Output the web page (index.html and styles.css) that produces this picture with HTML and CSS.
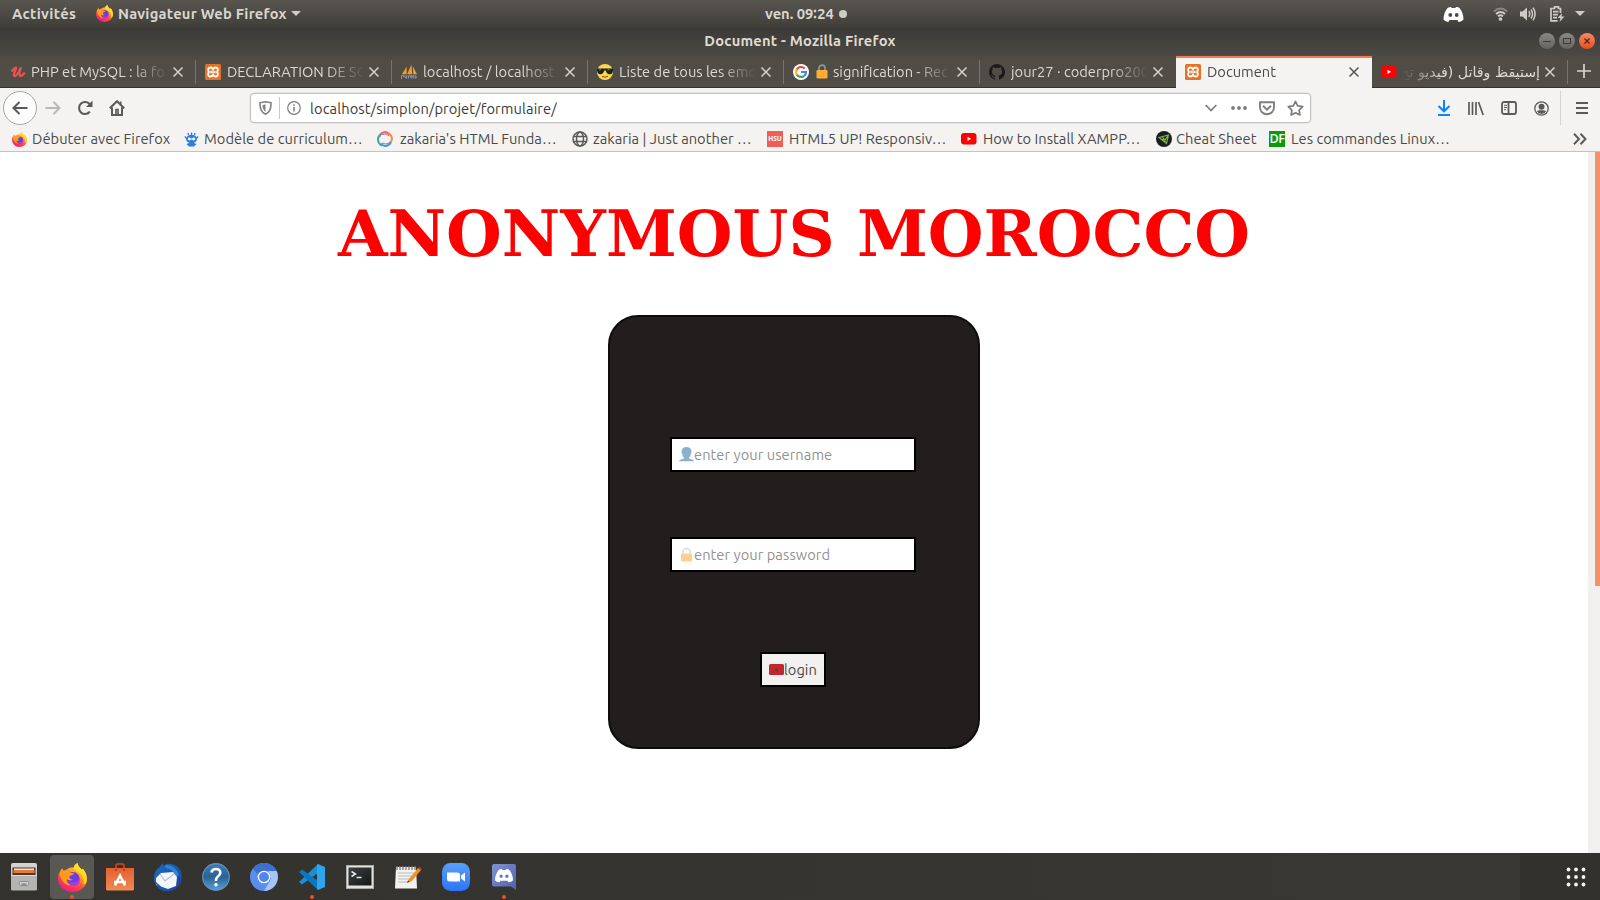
FILE: index.html
```html
<!DOCTYPE html>
<html lang="fr">
<head>
<meta charset="utf-8">
<title>Document</title>
<link rel="stylesheet" href="styles.css">
</head>
<body>
<svg class="defs" width="0" height="0">
  <defs>
    <linearGradient id="ffOuter" x1="0.85" y1="0.05" x2="0.3" y2="1"><stop offset="0" stop-color="#fff13f"/><stop offset=".35" stop-color="#ffa51f"/><stop offset=".65" stop-color="#ff4a3c"/><stop offset="1" stop-color="#f0188a"/></linearGradient>
    <linearGradient id="tbird" x1="0" y1="0" x2="1" y2="1"><stop offset="0" stop-color="#1d6fc0"/><stop offset="1" stop-color="#1b3f9c"/></linearGradient>
    <linearGradient id="grey" x1="0" y1="0" x2="0" y2="1"><stop offset="0" stop-color="#d6d6d6"/><stop offset="1" stop-color="#a2a2a2"/></linearGradient>
    <linearGradient id="bag" x1="0" y1="0" x2="0" y2="1"><stop offset="0" stop-color="#e4602f"/><stop offset="1" stop-color="#f08a55"/></linearGradient>
    <linearGradient id="help" x1="0" y1="0" x2="0" y2="1"><stop offset="0" stop-color="#3f7db4"/><stop offset=".5" stop-color="#2c6294"/><stop offset="1" stop-color="#5b9fd4"/></linearGradient>
    <linearGradient id="term" x1="0" y1="0" x2="1" y2="1"><stop offset="0" stop-color="#3c4040"/><stop offset="1" stop-color="#151717"/></linearGradient>
    <linearGradient id="zoomg" x1="0" y1="0" x2="0" y2="1"><stop offset="0" stop-color="#57a0fb"/><stop offset="1" stop-color="#2d75f5"/></linearGradient>
    <linearGradient id="disc" x1="0" y1="0" x2="1" y2="1"><stop offset="0" stop-color="#7f93d4"/><stop offset="1" stop-color="#5261a8"/></linearGradient>
  </defs>
  <symbol id="firefox" viewBox="0 0 28 28">
    <path fill="url(#ffOuter)" d="M4 5c0 1 .6 2 1.500 2.500L8.500 6C11 4.500 13 4 15 4.500 15.500 2.500 17 .8 19 0c0 3 2 4 4 6.500l1-1c2 2 4 6 4 9.500C28 22.500 22 28 14 28S0 22 0 14.500C0 10 2 8 4 5z"/>
    <circle cx="14.500" cy="15" r="6.300" fill="#6d3ce0"/>
    <path fill="#a83be0" d="M10 17q3 3 8 1 2-2 2.500-4 2 6-3 7.500-5 1-7.500-4.500z"/>
    <path fill="#ff9a1c" d="M1.500 11c.500-2.500 1.500-4.500 2.500-6 .5 1.500 1 2 2 2.500 2-.3 4 .2 5.500 1.800 1.500.2 3 .2 4 .7-.5 2-4 1.700-4.500 3.500.2 1.500 1.500 2.500 3.500 2.500-2 1.500-5 1-6-.5-.5 2 1 5 4.500 6C6 22 3 16 1.500 11z"/>
    <path fill="#ffe226" d="M19 0c0 3 2 4 4 6.500l1-1c3 3.500 4.500 8 3.500 13-1 1.500-2 2-3 2 1-5-1-9-4.500-11.500-2-1.500-4-2-5-4.500C15.500 2.500 17 .8 19 0z" opacity=".8"/>
  </symbol>
  <symbol id="xampp" viewBox="0 0 16 16">
    <rect width="16" height="16" rx="1.500" fill="#e77225"/>
    <path d="M8 5.300C7 3.400 5.600 3.200 4.500 3.600 2.600 4.300 3 6.700 3.900 8 3 9.300 2.600 11.700 4.500 12.400 5.600 12.800 7 12.600 8 10.700 9 12.600 10.400 12.800 11.500 12.400 13.400 11.700 13 9.300 12.100 8 13 6.700 13.400 4.300 11.500 3.600 10.400 3.200 9 3.400 8 5.300z" fill="none" stroke="#fff" stroke-width="1.900"/><path d="M6 8h4M6 6.800v2.400M10 6.800v2.400" stroke="#fff" stroke-width="1.300"/>
  </symbol>
  <symbol id="youtube" viewBox="0 0 16 16"><rect y="2" width="15.500" height="11.500" rx="3" fill="#f00"/><path d="M6.500 5.700v4.200l3.700-2.100z" fill="#fff"/></symbol>
  <symbol id="close" viewBox="0 0 12 12"><path d="M1.500 1.500l9 9m0-9l-9 9" stroke="currentColor" stroke-width="1.600" fill="none"/></symbol>
  <symbol id="discordFace" viewBox="0 0 20 15"><path fill="currentColor" fill-rule="evenodd" d="M4 1C5.500.3 6.500.1 7.500 0l.7 1h3.600l.7-1c1.500.1 2.500.4 3.500 1 2.500 3 4 7 4 11.500-1.500 1.700-3 2.200-5 2.500l-1-2H6l-1 2c-2-.3-3.500-.8-5-2.500C0 8 1.500 4 4 1zM6.800 6A1.900 2 0 1 0 6.800 10 1.900 2 0 1 0 6.800 6zM13.200 6A1.900 2 0 1 0 13.200 10 1.900 2 0 1 0 13.200 6z"/></symbol>
</svg>

<header class="panel">
  <div class="panel-left"><span class="t-act">Activités</span>
    <svg class="panel-ff" width="17" height="17"><use href="#firefox"/></svg>
    <span class="t-nav">Navigateur Web Firefox</span><i class="caret"></i></div>
  <div class="clock"><span class="t-clock">ven. 09∶24</span><i class="dot"></i></div>
  <div class="tray">
    <svg class="tray-discord" width="21" height="15"><use href="#discordFace"/></svg>
    <svg class="tray-wifi" width="15" height="14" viewBox="0 0 15 14" fill="none" stroke="#cfccc5" stroke-width="1.900"><path d="M.8 4.500q6.700-6 13.400 0" opacity=".45"/><path d="M3 7q4.500-4 9 0"/><path d="M5 9.300q2.500-2 5 0"/><circle cx="7.500" cy="12" r="1.100" fill="#cfccc5" stroke-width="1.500"/></svg>
    <svg class="tray-sound" width="16" height="14" viewBox="0 0 16 14" fill="none" stroke="#cfccc5" stroke-width="1.500"><path d="M0 4.500h2.500L7 .5v13L2.500 9.500H0z" fill="#cfccc5" stroke="none"/><path d="M8.800 4.200q1.800 2.800 0 5.600M11 2.500q3 4.500 0 9M13 .7q4.200 6.300 0 12.600"/></svg>
    <svg class="tray-batt" width="15" height="16" viewBox="0 0 15 16" fill="none" stroke="#cfccc5" stroke-width="1.700"><path d="M10.500 7V2.500h-2v-1.600h-4v1.600H1v12.300h6.500M3 5.700h5.500M3 8.700h5M3 11.700h4"/><path d="M12 7l-4.500 5h3l-1 4 5-5.500h-3z" fill="#cfccc5" stroke="none"/></svg>
    <i class="caret"></i>
  </div>
</header>

<div class="titlebar">
  <span class="t-title">Document - Mozilla Firefox</span>
  <div class="win-buttons">
    <i class="wb"><svg width="16" height="16"><path d="M4 8.500h8" stroke="#3b3a36"/></svg></i>
    <i class="wb"><svg width="16" height="16"><rect x="4.500" y="5.500" width="7" height="5" fill="none" stroke="#3b3a36"/></svg></i>
    <i class="wb wb-close"><svg width="16" height="16"><path d="M5.500 5.500l5 5m0-5l-5 5" stroke="#552010" stroke-width="1.200"/></svg></i>
  </div>
</div>

<nav class="tabs">
  <div class="tab first"><svg width="16" height="16" viewBox="0 0 16 16"><path d="M1.500 7.500C3.500 5.500 4.500 3.500 6 3.600 7 5 2.700 10 4 11.800 5.500 13.500 9.500 8 11 3.200 9.500 8 8.800 11.300 10.200 12c1.400.2 3-1.400 4.600-3.500" fill="none" stroke="#ec5252" stroke-width="2.200"/></svg><span class="label">PHP et MySQL : la fo</span><svg class="x" width="12" height="12"><use href="#close"/></svg></div>
  <div class="tab"><svg width="16" height="16"><use href="#xampp"/></svg><span class="label">DECLARATION DE SO</span><svg class="x" width="12" height="12"><use href="#close"/></svg></div>
  <div class="tab"><svg width="16" height="16" viewBox="0 0 17 16"><path d="M1 10.500l5-8v8zM6.500 10.500L11 0l1 10.500zM13 10.500L12.500 2 17 10.500z" fill="#f59b28"/><path d="M.5 15.500V12l2-.5.500 2M4 11.500v2h2v-2m0 4v-3M8 12v3m0-3h2v2m1-3v4m0-2h2m0-2v4m2-4v4m1-3v3" stroke="#9a9bc9" fill="none" stroke-width=".9"/></svg><span class="label">localhost / localhost</span><svg class="x" width="12" height="12"><use href="#close"/></svg></div>
  <div class="tab"><svg width="16" height="16" viewBox="0 0 16 16"><circle cx="8" cy="8" r="8" fill="#fdd64b"/><path d="M0 4.500h16v1.700c-.4 3.400-1.300 4-3.500 4S9.300 8.500 8.800 6.500H7.200C6.700 8.500 5.700 10.200 3.500 10.200S.4 9 0 6.200z" fill="#1f2224"/><path d="M2 6l2-.5M10.500 6l2-.5" stroke="#777"/><path d="M5 12.500q3 1.500 6-.3" stroke="#6e4d18" fill="none"/></svg><span class="label">Liste de tous les emo</span><svg class="x" width="12" height="12"><use href="#close"/></svg></div>
  <div class="tab"><svg width="16" height="16" viewBox="0 0 16 16" fill="none" stroke-width="2.200"><circle cx="8" cy="8" r="8" fill="#fff"/><path d="M11.700 4.600A5 5 0 0 0 3.800 5.300" stroke="#ea4335"/><path d="M3.800 5.300a5 5 0 0 0 0 5.300" stroke="#fbbc05"/><path d="M3.800 10.600a5 5 0 0 0 7.400 1.200" stroke="#34a853"/><path d="M8 8h5a5 5 0 0 1-1.800 3.800" stroke="#4285f4"/></svg><svg class="tab-lock" width="12" height="15" viewBox="0 0 12 15"><path d="M3 7V4.200a3 3 0 0 1 6 0V7" fill="none" stroke="#8799a3" stroke-width="1.700"/><rect x=".5" y="6" width="11" height="8.500" rx="1.300" fill="#ffac33"/></svg><span class="label">signification - Rec</span><svg class="x" width="12" height="12"><use href="#close"/></svg></div>
  <div class="tab"><svg width="16" height="16" viewBox="0 0 16 16"><path fill="#1b1b1b" d="M8 0a8 8 0 0 0-2.500 15.600c.4.100.5-.2.500-.4v-1.500c-2.200.5-2.700-1-2.700-1-.4-.9-.9-1.100-.9-1.100-.7-.5.1-.5.100-.5.800.1 1.200.8 1.200.8.700 1.300 1.900.9 2.300.7 0-.5.300-.9.500-1.100-1.800-.2-3.600-.9-3.600-4 0-.9.300-1.600.8-2.100-.1-.200-.4-1 .1-2.100 0 0 .7-.2 2.200.8a7.600 7.600 0 0 1 4 0c1.500-1 2.200-.8 2.200-.8.400 1.100.1 1.900.1 2.100.5.500.8 1.200.8 2.100 0 3.100-1.900 3.800-3.700 4 .3.300.6.800.6 1.500v2.200c0 .200.100.5.500.4A8 8 0 0 0 8 0z"/></svg><span class="label">jour27 · coderpro200</span><svg class="x" width="12" height="12"><use href="#close"/></svg></div>
  <div class="tab active"><svg width="16" height="16"><use href="#xampp"/></svg><span class="label">Document</span><svg class="x" width="12" height="12"><use href="#close"/></svg></div>
  <div class="tab last"><svg width="16" height="16"><use href="#youtube"/></svg><span class="label rtl" dir="rtl">إستيقظ وقاتل (فيديو تح</span><svg class="x" width="12" height="12"><use href="#close"/></svg></div>
  <svg class="plus" width="14" height="14"><path d="M7 0v14M0 7h14" stroke="#d8d5cf" stroke-width="1.700"/></svg>
</nav>

<div class="toolbar">
  <i class="back"><svg width="16" height="14" viewBox="0 0 16 14" fill="none" stroke="#5a5a58" stroke-width="2"><path d="M15.500 7H1.500M7.500 1l-6 6 6 6"/></svg></i>
  <svg class="fwd" width="16" height="14" viewBox="0 0 16 14" fill="none" stroke="#b9b8b6" stroke-width="2"><path d="M.5 7h14M8.500 1l6 6-6 6"/></svg>
  <svg class="reload" width="16" height="16" viewBox="0 0 16 16"><path d="M12.800 4.300A6 6 0 1 0 12.800 11.700" fill="none" stroke="#5a5a58" stroke-width="2.100"/><path d="M15.500.5v6.500H9z" fill="#5a5a58"/></svg>
  <svg class="home" width="16" height="16" viewBox="0 0 16 16" fill="none" stroke="#5a5a58" stroke-width="2"><path d="M.8 8.300L8 1.200l7.200 7.100M3 7.500V15h10V7.500"/><path d="M7 15V9.500h2V15M11.700 1.500v3" stroke-width="1.600"/></svg>
  <div class="urlbar">
    <svg class="shield" width="13" height="14" viewBox="0 0 13 14"><path d="M1 1.800Q4 1.500 6.500.8 9 1.500 12 1.800c.2 6-1.500 9.700-5.500 11.400C2.500 11.500.8 7.800 1 1.800z" fill="none" stroke="#828281" stroke-width="1.600"/><path d="M6.500 3.200Q5 4 3.500 4c0 3.500 1 5.700 3 7z" fill="#828281"/></svg>
    <i class="url-sep"></i>
    <svg class="info" width="14" height="14" viewBox="0 0 14 14"><circle cx="7" cy="7" r="6.300" fill="none" stroke="#7d7d7c" stroke-width="1.200"/><path d="M7 6v4.500M7 3.300v1.500" stroke="#7d7d7c" stroke-width="1.500"/></svg>
    <span class="t-url">localhost/simplon/projet/formulaire/</span>
    <svg class="chev" width="12" height="8" viewBox="0 0 12 8" fill="none" stroke="#7d7d7c" stroke-width="1.800"><path d="M.7 1L6 6.500 11.300 1"/></svg>
    <svg class="dots" width="16" height="4" fill="#7d7d7c"><circle cx="2" cy="2" r="1.900"/><circle cx="8" cy="2" r="1.900"/><circle cx="14" cy="2" r="1.900"/></svg>
    <svg class="pocket" width="16" height="15" viewBox="0 0 16 15" fill="none" stroke="#7d7d7c" stroke-width="1.900"><path d="M1 1.300h14v5a7 7 0 0 1-14 0z" stroke-linejoin="round"/><path d="M4.500 5.300L8 8.700l3.500-3.400" stroke-linecap="round"/></svg>
    <svg class="star" width="17" height="16" viewBox="0 0 17 16"><path d="M8.500 1.400l2.200 4.500 5 .7-3.600 3.500.8 4.900-4.400-2.300L4.100 15l.8-4.900L1.300 6.600l5-.7z" fill="none" stroke="#7d7d7c" stroke-width="1.700" stroke-linejoin="round"/></svg>
  </div>
  <div class="tools">
    <svg width="14" height="16" fill="none" stroke="#0a84ff" stroke-width="2"><path d="M7 0v11M1.500 6L7 11.300 12.500 6M1 15h12"/></svg>
    <svg width="16" height="15" fill="none" stroke="#5a5a58" stroke-width="1.700"><path d="M1 1v13M4.500 1v13M8 1v13M10.500 1l4.700 13"/></svg>
    <svg width="16" height="14" fill="none" stroke="#5a5a58" stroke-width="1.800"><rect x="1" y="1" width="14" height="12" rx="2"/><path d="M7.500 1v12"/><path d="M3 4.300h3M3 6.500h3M3 8.700h2" stroke-width="1"/></svg>
    <svg width="15" height="15" viewBox="0 0 15 15"><circle cx="7.500" cy="7.500" r="6.700" fill="none" stroke="#5a5a58" stroke-width="1.300"/><circle cx="7.500" cy="5.800" r="3" fill="#5a5a58"/><path d="M2.800 10.300q2-1.300 3-1h3.400q1-.3 3 1Q10.500 13 7.500 13t-4.700-2.700z" fill="#5a5a58"/></svg>
  </div>
  <i class="tool-sep"></i>
  <svg class="menu" width="12" height="12"><path d="M0 1h12M0 6h12M0 11h12" stroke="#5a5a58" stroke-width="2"/></svg>
</div>

<div class="bookmarks">
  <a class="bm b1"><svg width="15" height="15"><use href="#firefox"/></svg><span>Débuter avec Firefox</span></a>
  <a class="bm b2"><svg width="15" height="15" viewBox="0 0 15 15"><path d="M.8 4.500l2 2m11.400-2l-2 2M4.500 3L4 1M10.500 3l.5-2M7.500 3V.5" stroke="#2a7de1" stroke-width="1.300"/><ellipse cx="7.500" cy="7" rx="5.500" ry="4.300" fill="#2a7de1"/><path d="M2.500 12l2.500-1h5l2.500 1-2.500 2.500H5z" fill="#2a7de1"/><path d="M4 7h7" stroke="#fff"/><circle cx="5.300" cy="7" r="1.400" fill="#fff"/><circle cx="9.700" cy="7" r="1.400" fill="#fff"/></svg><span>Modèle de curriculum…</span></a>
  <a class="bm b3"><svg width="16" height="16" viewBox="0 0 16 16" fill="none" stroke-width="2"><path d="M2.500 4.500A7 7 0 0 1 8 1q3 .2 4 3" stroke="#ee6c5a"/><path d="M11 2a7 7 0 0 1 4 6q0 2-2.500 4" stroke="#f58a4e"/><path d="M14 11a7 7 0 0 1-6 4q-2.500 0-4-2.500" stroke="#3d9ad1"/><path d="M5 14.500A7 7 0 0 1 1 8q0-3 3-4" stroke="#35b09b"/><path d="M5 3.500q4-2 7.500 1.500M12 12q-3 2-7 0" stroke="#c75bb2" stroke-width="1"/></svg><span>zakaria's HTML Funda…</span></a>
  <a class="bm b4"><svg width="16" height="16" viewBox="0 0 16 16" fill="none" stroke="#5a5a58" stroke-width="1.500"><circle cx="8" cy="8" r="7"/><ellipse cx="8" cy="8" rx="3.500" ry="7"/><path d="M1.500 5.500h13M1.500 10.500h13"/></svg><span>zakaria | Just another …</span></a>
  <a class="bm b5"><i class="hsu">HSU</i><span>HTML5 UP! Responsiv…</span></a>
  <a class="bm b6"><svg width="16" height="16"><use href="#youtube"/></svg><span>How to Install XAMPP…</span></a>
  <a class="bm b7"><svg width="16" height="16" viewBox="0 0 16 16"><circle cx="8" cy="8" r="8" fill="#1c1f22"/><path d="M3 6.500L12.500 4l-2 8.500zM6.500 6l2.500 3 3-4.500M5 8l4 1v2.500" fill="none" stroke="#83b93b" stroke-width="1.100"/></svg><span>Cheat Sheet</span></a>
  <a class="bm b8"><i class="df">DF</i><span>Les commandes Linux…</span></a>
  <svg class="more" width="14" height="12" fill="none" stroke="#5a5a58" stroke-width="2"><path d="M1 .7L6 6l-5 5.300M7.500.7l5 5.300-5 5.300"/></svg>
</div>

<div class="viewport">
  <main class="page">
    <h1>ANONYMOUS MOROCCO</h1>
    <form class="card">
      <label class="field"><svg width="15" height="15" viewBox="0 0 15 15"><path d="M7.500 0c3 0 5 1.800 5 4.500 0 1.300-.2 2-.8 2.500 0 1.800-1 3-1.800 3.700 0 1 1 1.200 2.500 1.500 1.800.4 2.400 1 2.500 2H.1c0-1 .9-1.600 2.500-2 1.500-.3 2.500-.5 2.500-1.500C4.300 10 3.300 8.800 3.300 7c-.6-.5-.8-1.200-.8-2.500C2.500 1.800 4.500 0 7.500 0z" fill="#8bb1cd"/></svg><input type="text" placeholder="enter your username"></label>
      <label class="field"><svg width="15" height="15" viewBox="0 0 15 15"><path d="M4 8V5a3.600 3.600 0 0 1 7.200 0v3" fill="none" stroke="#d3dadf" stroke-width="1.500"/><rect x="2" y="6.500" width="11" height="8" rx="1.200" fill="#ffcf8f"/></svg><input type="password" placeholder="enter your password"></label>
      <button class="login" type="button"><svg width="15" height="11" viewBox="0 0 15 11"><rect width="15" height="11" rx="1.500" fill="#c1272d"/><path d="M7.500 3.500l.5 1.400h1.600l-1.200 1 .4 1.600-1.300-1-1.300 1 .4-1.600-1.200-1H7z" fill="#3b4f2c"/></svg><span>login</span></button>
    </form>
  </main>
  <div class="scroll"><i class="thumb"></i></div>
</div>

<footer class="dock">
  <div class="app"><svg width="28" height="28" viewBox="0 0 28 28"><rect x="1" y="0" width="26" height="27" rx="2" fill="url(#grey)"/><path d="M2.500 4.500h23v8h-23z" fill="#50382c"/><path d="M4 5.500h20v1.500H4z" fill="#f3ebdf"/><path d="M3.500 7h21v3h-21z" fill="#e77a38"/><path d="M1 12h26v14q0 1.500-1.500 1.500h-23Q1 27.500 1 26z" fill="#b4b4b3"/><path d="M1 12.500h26" stroke="#dadada"/><rect x="9.500" y="18.500" width="9" height="4" rx="1" fill="#d8d8d8" stroke="#888"/><path d="M11.500 21h5" stroke="#555"/></svg></div>
  <div class="app on run"><svg width="29" height="29"><use href="#firefox"/></svg></div>
  <div class="app"><svg width="28" height="28" viewBox="0 0 28 28"><path d="M10 7V3q0-2 2-2h4q2 0 2 2v4" fill="none" stroke="#b8441c" stroke-width="2"/><path d="M0 5h28v21q0 1.500-1.500 1.500h-25Q0 27.500 0 26z" fill="url(#bag)"/><path d="M10 6v2M18 6v2" stroke="#b8441c" stroke-width="2"/><path d="M9 22.500l5-10 5 10M8 19h12" fill="none" stroke="#fff" stroke-width="2.400"/></svg></div>
  <div class="app"><svg width="30" height="29" viewBox="0 0 30 29"><path d="M10 3Q17-2 25 4q6 7 3 15-4 9-13 9.500Q4 28 1 18 0 8 7 4q1-2 3-4z" fill="url(#tbird)"/><path d="M12 2q10-1 14 10l-3 2q-2-7-10-9z" fill="#2c86d4"/><path d="M3 15l5-5 12-1 4 5-1 9-8 3-12-4z" fill="#f2f5fa"/><path d="M7 11l5 7 9-7" fill="none" stroke="#b6bdc9" stroke-width="1.200"/><path d="M1 16q2 9 11 12l6-1Q7 26 1 16z" fill="#1b55b5"/></svg></div>
  <div class="app"><svg width="28" height="28" viewBox="0 0 28 28"><circle cx="14" cy="14" r="13.300" fill="url(#help)" stroke="#5e94c2" stroke-width="1.200"/><path d="M9.500 9.500Q10 6 14 6t4.300 3.500Q18.300 12 16 13.500T14 18" fill="none" stroke="#fff" stroke-width="2.600"/><circle cx="14" cy="21.800" r="1.800" fill="#fff"/></svg></div>
  <div class="app"><svg width="28" height="28" viewBox="0 0 28 28"><circle cx="14" cy="14" r="14" fill="#5b8def"/><path d="M14 0a14 14 0 0 1 12.500 8H14q-4.500.5-6 4L3 5.500Q7.500 0 14 0z" fill="#3d6fd0"/><path d="M26.500 8A14 14 0 0 1 14 28l6-10q2-5-2-10z" fill="#a6c4fa"/><circle cx="14" cy="14" r="6.300" fill="#fff"/><circle cx="14" cy="14" r="5" fill="#4f86ee"/></svg></div>
  <div class="app run"><svg width="28" height="28" viewBox="0 0 28 28"><path d="M20 1v9L4 21.500 1 19z" fill="#1b8fd6"/><path d="M1 9l3-2.500L20 18v9z" fill="#0a78c0"/><path d="M20 1l7 3v20l-7 3-1-1V2z" fill="#2ea6ee"/></svg></div>
  <div class="app"><svg width="28" height="24" viewBox="0 0 28 24"><rect x=".5" y=".5" width="27" height="23" fill="#e2e2df" stroke="#aaa"/><rect x="2.500" y="2.500" width="23" height="18" fill="url(#term)"/><path d="M5.500 6.500l4 2.500-4 2.500M10.500 12.500h5" fill="none" stroke="#e8e8e8" stroke-width="1.500"/></svg></div>
  <div class="app"><svg width="28" height="26" viewBox="0 0 28 26"><path d="M2 3h20l1 21.500H1z" fill="#f2f2ee"/><path d="M3 2v4m3-4v4m3-4v4m3-4v4m3-4v4m3-4v4m3-4v4" stroke="#777" stroke-width="1.300"/><path d="M4 9h16M4 12h14M4 15h12M4 18h9" stroke="#b9b9b9"/><path d="M13 19l2-4L24 4l3 2-9 11z" fill="#f0902a"/><path d="M24 4l1-1q2 0 2.500 2L27 6z" fill="#d22c3a"/><path d="M13 19l1-2.500 1.500 1z" fill="#333"/></svg></div>
  <div class="app"><svg width="28" height="28" viewBox="0 0 28 28"><rect width="28" height="28" rx="8.500" fill="url(#zoomg)"/><path d="M5 9.500h10q3 0 3 2.500v6.500H8q-3 0-3-2.500zM19 12.500l4-3v9l-4-3z" fill="#fff"/></svg></div>
  <div class="app run"><svg width="26" height="26" viewBox="0 0 26 26"><path d="M3 0h20q2 0 2 2v24l-5-3.500H3q-2 0-2-2V2q0-2 2-2z" fill="url(#disc)"/><svg x="4" y="5" width="18" height="13.500" color="#fff"><use href="#discordFace"/></svg></svg></div>
  <div class="launcher"><svg width="20" height="20" fill="#f4f3f0"><circle cx="2.500" cy="2.500" r="1.900"/><circle cx="10" cy="2.500" r="1.900"/><circle cx="17.500" cy="2.500" r="1.900"/><circle cx="2.500" cy="10" r="1.900"/><circle cx="10" cy="10" r="1.900"/><circle cx="17.500" cy="10" r="1.900"/><circle cx="2.500" cy="17.500" r="1.900"/><circle cx="10" cy="17.500" r="1.900"/><circle cx="17.500" cy="17.500" r="1.900"/></svg></div>
</footer>
</body>
</html>
```
FILE: styles.css
```css
* { box-sizing: border-box; }
body {
  margin: 0; width: 1600px; height: 900px; overflow: hidden;
  display: flex; flex-direction: column;
  font-family: Ubuntu, "Noto Sans", "Open Sans", sans-serif; font-size: 14.67px; color: #4a4a48;
}
svg { display: block; flex: none; }
i { display: block; flex: none; font-style: normal; }
span { white-space: nowrap; }
.defs { position: absolute; }

/* Desktop panel */
.panel { height: 28px; flex: none; display: grid; grid-template-columns: 1fr auto 1fr; align-items: center; background: linear-gradient(#595650, #3f3e39); color: #d9d6cf; font-weight: 700; font-size: 14.67px; line-height: 26px; padding-bottom: 1px; }
.panel-left { display: flex; align-items: center; padding-left: 12px; }
.t-act { width: 64px; letter-spacing: .37px; }
.panel-ff { margin: 0 5px 0 20px; }
.t-nav { width: 169px; letter-spacing: .26px; }
.caret { margin-left: 5px; border: 5px solid transparent; border-top-color: #cfccc5; border-bottom: 0; }
.clock { display: flex; align-items: center; width: 82px; margin-left: 12px; }
.t-clock { width: 70px; }
.dot { width: 8px; height: 8px; border-radius: 50%; background: #cfccc5; margin-left: 4px; }
.panel-left .caret { margin-left: 4px; }
.tray { display: flex; align-items: center; justify-content: flex-end; padding-right: 15px; }
.tray-discord { color: #fff; margin: 2px 29px 0 0; }
.tray-wifi { margin-right: 12px; }
.tray-sound { margin-right: 14px; }
.tray-batt { margin-right: 5px; }

/* Window title */
.titlebar { height: 27px; flex: none; position: relative; display: flex; justify-content: center; background: linear-gradient(#3b3a36, #4b4943); color: #dfdbd2; font-weight: 700; font-size: 14.67px; letter-spacing: .22px; line-height: 26px; }
.win-buttons { position: absolute; right: 5px; top: 5px; display: flex; gap: 4px; }
.wb { width: 16px; height: 16px; border-radius: 50%; background: linear-gradient(#8b8983, #65635d); }
.wb-close { background: linear-gradient(#f58a62, #e4501f); }

/* Tabs */
.tabs { height: 33px; flex: none; display: flex; background: linear-gradient(#4c4a44, #504d46 6px); color: #dcd9d2; border-bottom: 1px solid #34332f; }
.tab { width: 196px; flex: none; display: flex; align-items: center; padding: 1px 12px 0 9px; position: relative; }
.tab.first { padding-left: 10px; }
.tab::after { content: ""; position: absolute; right: 0; top: 5px; height: 24px; width: 1px; background: #77746c; }
.tab:nth-child(6)::after, .tab.active::after { display: none; }
.label { flex: 1; min-width: 0; margin: 0 4px 0 6px; overflow: hidden; line-height: 24px; -webkit-mask-image: linear-gradient(90deg, #000 calc(100% - 38px), transparent); mask-image: linear-gradient(90deg, #000 calc(100% - 38px), transparent); }
.first .label { margin-left: 5px; }
.x { color: #d0cdc6; }
.tab-lock { margin-left: 7px; }
.tab-lock + .label { margin-left: 5px; }
.tab.active { height: 33px; margin-top: 0; background: linear-gradient(#504d46 1px, #ef7c53 1px, #ef7c53 3px, #f4f3f2 3px); color: #4a4a48; }
.active .x { color: #5a5a58; }
.label.rtl { font-family: "DejaVu Sans", sans-serif; font-size: 14.2px; -webkit-mask-image: linear-gradient(270deg, #000 calc(100% - 38px), transparent); mask-image: linear-gradient(270deg, #000 calc(100% - 38px), transparent); }
.plus { margin: 9px 0 0 9px; }

/* Navigation */
.toolbar { height: 41px; flex: none; display: flex; align-items: center; background: #f4f3f2; padding: 0 0 1px 3px; }
.back { width: 34px; height: 34px; border: 1px solid #a9a8a6; border-radius: 50%; background: #fcfcfc; display: grid; place-items: center; }
.fwd { margin-left: 8px; }
.reload { margin-left: 16px; }
.home { margin-left: 16px; }
.urlbar { width: 1061px; height: 30px; margin-left: 125px; border: 1px solid #c2c1bf; border-radius: 4px; background: #fff; display: flex; align-items: center; padding: 0 6px 0 8px; box-shadow: 0 0 0 .5px #dddcda; }
.url-sep { width: 1px; height: 22px; background: #c8c8c7; margin: 0 7px; }
.t-url { color: #3a3a38; margin-left: 9px; flex: 1; letter-spacing: .12px; }
.chev { margin-right: 14px; }
.dots { margin-right: 12px; }
.pocket { margin-right: 12px; }
.tools { display: flex; align-items: center; gap: 17px; margin-left: 126px; }
.tool-sep { width: 1px; height: 34px; background: #d5d4d2; margin: 0 15px 0 11px; }

/* Bookmarks */
.bookmarks { height: 23px; flex: none; display: grid; grid-template-columns: 172px 193px 195px 195px 194px 195px 113px 304px auto; align-items: center; justify-content: start; padding: 0 0 3px 12px; background: #f4f3f2; border-bottom: 1px solid #c4c3c1; }
.bm { display: flex; align-items: center; gap: 6px; line-height: 20px; letter-spacing: .04px; }
.b1, .b2 { gap: 5px; }
.b4 { gap: 5px; }
.b7 { gap: 4px; }
.b3 { gap: 7px; }
.hsu, .df { width: 16px; height: 16px; background: #ec5f5b; color: #fff; font: 700 6.5px/16px "Open Sans", sans-serif; text-align: center; }
.df { background: #0c980c; font: 600 12.5px/16px "Open Sans", sans-serif; letter-spacing: -.5px; }

/* Page content */
.viewport { height: 701px; flex: none; display: flex; background: #fff; }
.page { flex: 1; display: flex; flex-direction: column; align-items: center; }
h1 { margin: 44px 0 0; font: 700 64px/76px "DejaVu Serif", serif; color: #f00; }
.card { width: 372px; height: 434px; margin-top: 43px; border: 2px solid #0e0c0c; border-radius: 30px; background: #221e1e; display: flex; flex-direction: column; align-items: center; padding: 120px 2px 0 0; }
.field { width: 246px; height: 35px; margin-bottom: 65px; border: 2px solid #000; background: #fff; display: flex; align-items: center; padding-left: 7px; }
.field input { border: 0; padding: 0; outline: 0; background: none; font: inherit; letter-spacing: .06px; width: 215px; height: 28px; }
.field input::placeholder { color: #929290; opacity: 1; }
.login { width: 66px; height: 35px; margin-top: 15px; padding: 0 0 0 7px; border: 2px solid #000; background: #f2f1f0; display: flex; align-items: center; font: inherit; color: #4a4a48; }
.scroll { width: 12px; background: #f1f0ee; display: flex; justify-content: flex-end; }
.thumb { width: 5px; height: 434px; background: #f4906a; }

/* Dock */
.dock { height: 47px; flex: none; display: flex; background: linear-gradient(90deg, #33322e, #383732 1520px, #32312d 1520px); }
.app { width: 44px; height: 44px; margin: 2px 2px 0; border-radius: 4px; display: grid; place-items: center; position: relative; }
.app.on { background: #595853; }
.app.run::after { content: ""; position: absolute; bottom: 0; left: 20px; width: 4px; height: 4px; border-radius: 50%; background: #e95420; }
.launcher { margin-left: auto; padding: 14px 14px 0 0; }
```
